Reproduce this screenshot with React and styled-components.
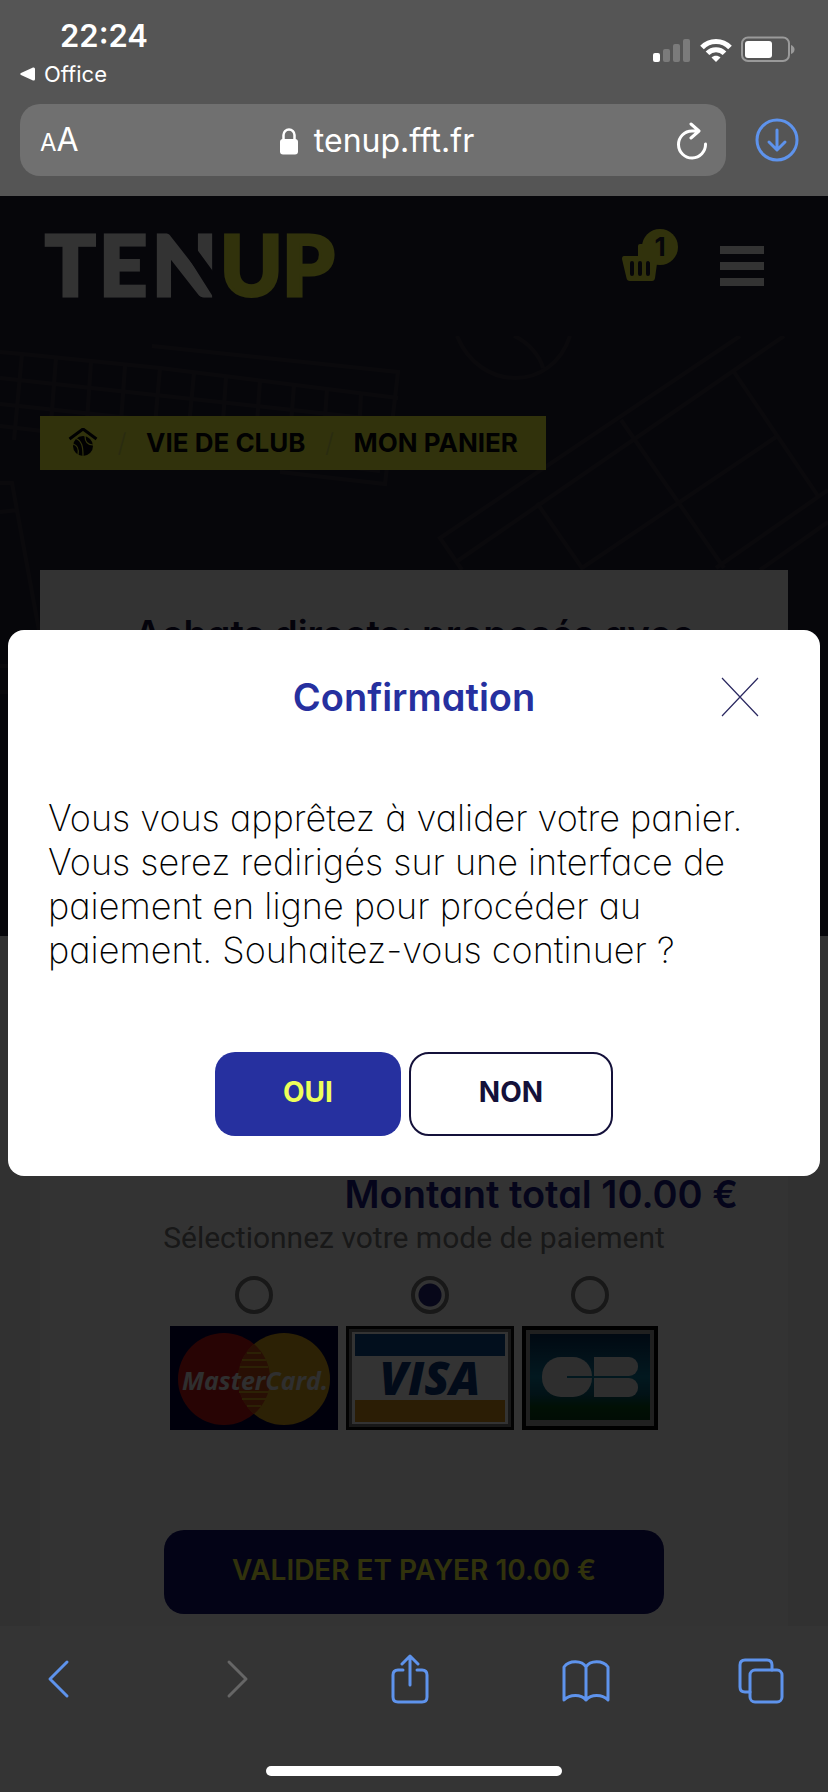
import React, { useState } from 'react';
import styled, { createGlobalStyle, css } from 'styled-components';

const navy = '#211f34';
const lime = '#f2fa3c';
const safariBlue = '#5e93ec';

const GlobalStyle = createGlobalStyle`
    * {
        box-sizing: border-box;
    }
    body {
        margin: 0;
        font-family: Inter, 'Liberation Sans', sans-serif;
        background: #343434;
    }
    button {
        font: inherit;
        color: inherit;
        border: 0;
        padding: 0;
        background: none;
        cursor: pointer;
    }
    svg {
        display: block;
    }
`;

const Phone = styled.div`
    display: flex;
    flex-direction: column;
    min-height: 100vh;
`;

/* ---------- browser top ---------- */

const TopChrome = styled.header`
    padding: 16px 20px 20px;
    background: #555;
    color: #fff;
`;

const StatusBar = styled.div`
    display: flex;
    justify-content: space-between;
    height: 88px;
    padding-right: 13px;
`;

const StatusLeft = styled.div`
    display: flex;
    flex-direction: column;
    align-items: flex-start;
`;

const Clock = styled.time`
    padding-left: 40px;
    font-size: 31px;
    line-height: 40px;
    font-weight: 600;
`;

const BackToApp = styled.button`
    display: flex;
    align-items: center;
    gap: 8px;
    font-size: 22px;
    line-height: 36px;
`;

const StatusIcons = styled.div`
    display: flex;
    align-items: flex-end;
    gap: 9px;
    height: 46px;
`;

const AddressRow = styled.div`
    display: flex;
    align-items: center;
    gap: 28px;
    padding-right: 8px;
`;

const AddressField = styled.div`
    display: flex;
    align-items: center;
    justify-content: space-between;
    flex: 1;
    height: 72px;
    padding: 2px 18px 0 20px;
    border-radius: 20px;
    background: #707070;
`;

const TextSize = styled.button`
    width: 38px;
    font-size: 32px;
    line-height: 40px;
    text-align: left;
    white-space: nowrap;

    small {
        font-size: 24px;
    }
`;

const Address = styled.div`
    display: flex;
    align-items: center;
    gap: 16px;
    font-size: 32px;
    line-height: 40px;
`;

/* ---------- web page ---------- */

const Viewport = styled.div`
    position: relative;
    flex: 1;
    display: flex;
    flex-direction: column;
    overflow: hidden;
    background: linear-gradient(${navy} 740px, #f5f5f5 740px);
`;

const Court = styled.svg`
    position: absolute;
    top: 140px;
    left: 0;
    width: 100%;
    height: 600px;
    fill: none;
    stroke: #33313f;
    stroke-width: 4;
`;

const SiteHeader = styled.div`
    display: flex;
    align-items: center;
    height: 140px;
    padding: 0 64px 0 44px;
`;

const LogoLink = styled.a`
    margin-right: auto;
`;

const Cart = styled.button`
    position: relative;
    width: 56px;
    height: 54px;
    margin: 0 42px 20px 0;
`;

const CartCount = styled.span`
    position: absolute;
    top: 0;
    right: 0;
    width: 36px;
    height: 36px;
    border-radius: 50%;
    background: ${lime};
    color: ${navy};
    font-size: 26px;
    line-height: 36px;
    font-weight: 700;
`;

const Burger = styled.button`
    display: flex;
    flex-direction: column;
    gap: 8px;
    width: 44px;

    i {
        height: 8px;
        width: 100%;
        background: #fff;
    }
`;

const Breadcrumb = styled.nav`
    position: relative;
    display: flex;
    align-items: center;
    align-self: flex-start;
    height: 54px;
    margin: 80px 40px 100px;
    padding: 0 28px;
    background: ${lime};
    color: #05050a;
    font-size: 26px;
    line-height: 32px;
    font-weight: 700;

    a {
        color: inherit;
        text-decoration: none;
    }
`;

const Slash = styled.span`
    width: 48px;
    text-align: center;
    font-weight: 300;
    color: #d0d850;
`;

const Card = styled.main`
    position: relative;
    flex: 1;
    display: flex;
    flex-direction: column;
    align-items: center;
    margin: 0 40px;
    padding: 42px 50px 12px;
    background: #fff;
`;

const CardTitle = styled.h1`
    margin: 0 0 auto;
    font-size: 38px;
    line-height: 44px;
    font-weight: 600;
    color: #14123a;
    text-align: center;
    font-feature-settings: 'cv11';
`;

const Total = styled.p`
    align-self: flex-end;
    margin: 0;
    font-size: 38px;
    line-height: 52px;
    font-weight: 600;
    color: #1c1c86;
    font-feature-settings: 'cv11';
`;

const Payment = styled.fieldset`
    display: flex;
    flex-direction: column;
    align-items: center;
    margin: 0 0 100px;
    padding: 0;
    border: 0;
    font-family: Roboto, sans-serif;

    legend {
        padding: 0;
        margin: 0 auto 20px;
        font-size: 30px;
        line-height: 36px;
        color: #777;
    }
`;

const Methods = styled.div`
    display: flex;
    gap: 8px;
`;

const Method = styled.label`
    display: flex;
    flex-direction: column;
    align-items: center;
    gap: 12px;
`;

const Radio = styled.input`
    appearance: none;
    width: 38px;
    height: 38px;
    margin: 0;
    border: 4px solid #777;
    border-radius: 50%;
    background: #fff;

    &:checked {
        background: radial-gradient(circle, #23237c 11px, #fff 12px);
    }
`;

const Button = styled.button`
    height: 84px;
    padding: 0 68px 4px;
    border-radius: 20px;
    font-size: 28px;
    line-height: 32px;
    font-weight: ${props => (props.$dark ? 600 : 700)};
    ${props =>
        props.$outline
            ? css`
                  border: 2px solid #14113a;
                  background: #fff;
                  color: #14113a;
              `
            : css`
                  background: ${props.$dark ? '#0f0f70' : '#26309f'};
                  color: ${props.$dark ? lime : '#eeff5a'};
              `}
`;

/* ---------- dialog ---------- */

const Overlay = styled.div`
    position: absolute;
    inset: 0;
    display: flex;
    flex-direction: column;
    justify-content: center;
    padding: 0 8px 16px;
    background: rgba(0, 0, 0, 0.8);
`;

const Dialog = styled.section`
    padding: 40px;
    border-radius: 16px;
    background: #fff;
    font-feature-settings: 'cv11';
`;

const DialogHead = styled.div`
    display: grid;
    grid-template-columns: 40px 1fr 40px;
    align-items: center;
    padding: 0 20px;
    margin-bottom: 72px;

    h2 {
        grid-column: 2;
        margin: 0;
        font-size: 38px;
        line-height: 54px;
        font-weight: 600;
        color: #26309f;
        text-align: center;
    }
`;

const Message = styled.p`
    margin: 0 0 80px;
    font-size: 36px;
    line-height: 44px;
    font-weight: 200;
    color: #000;
`;

const Actions = styled.div`
    display: flex;
    justify-content: center;
    gap: 8px;
`;

/* ---------- browser bottom ---------- */

const BottomChrome = styled.footer`
    height: 166px;
    padding: 28px 0 16px;
    background: #343434;
    display: flex;
    flex-direction: column;
    justify-content: space-between;
`;

const Toolbar = styled.nav`
    display: flex;
    justify-content: space-between;
    padding: 0 42px 0 34px;
    color: ${safariBlue};

    button {
        display: flex;
        justify-content: center;
        width: 50px;
    }
`;

const HomeIndicator = styled.div`
    align-self: center;
    width: 296px;
    height: 10px;
    border-radius: 5px;
    background: #fff;
`;

/* ---------- drawings ---------- */

const Line = props => (
    <svg fill="none" stroke="currentColor" strokeWidth="3" strokeLinecap="round" strokeLinejoin="round" {...props} />
);

function Signal() {
    return (
        <svg width="38" height="24" fill="#7b7b7b">
            <rect x="0" y="15" width="7" height="9" rx="2" fill="#fff" />
            <rect x="10" y="11" width="7" height="13" rx="2" />
            <rect x="20" y="6" width="7" height="18" rx="2" />
            <rect x="30" y="1" width="7" height="23" rx="2" />
        </svg>
    );
}

function Wifi() {
    return (
        <svg width="32" height="24" viewBox="0 0 32 24" fill="none" stroke="#fff" strokeWidth="5">
            <path d="M2 9.5 C9.5 1.5 22.5 1.5 30 9.5" />
            <path d="M7.5 15.3 C12 10.5 20 10.5 24.5 15.3" />
            <path d="M11.5 19.5 C14 17 18 17 20.5 19.5 L16 24 Z" fill="#fff" stroke="none" />
        </svg>
    );
}

function Battery() {
    return (
        <svg width="54" height="26" viewBox="0 0 54 26">
            <rect x="1" y="1.5" width="47" height="23.5" rx="6" fill="none" stroke="#9a9a9a" strokeWidth="2" />
            <rect x="4" y="5" width="27" height="17" rx="3" fill="#fff" />
            <path d="M50 9 q3.5 1.5 3.5 4.5 t-3.5 4.5 z" fill="#9a9a9a" />
        </svg>
    );
}

function Lock() {
    return (
        <svg width="18" height="27" viewBox="0 0 18 27">
            <rect y="11" width="18" height="15.5" rx="3" fill="#fff" />
            <path d="M3.5 12 V7 a5.5 5.5 0 0 1 11 0 V12" fill="none" stroke="#fff" strokeWidth="2.5" />
        </svg>
    );
}

function Logo() {
    return (
        <svg width="300" height="120" fontFamily="Lato" fontWeight="900" fontSize="84" strokeWidth="3">
            <g fill="#fff" stroke="#fff">
                <text x="1" y="90">T</text>
                <text x="55" y="90">E</text>
                <text x="108" y="90">N</text>
            </g>
            <path d="M128 26 H152 V42 L171 68 V94 Z" fill={navy} />
            <g fill={lime} stroke={lime}>
                <text x="176" y="90">U</text>
                <text x="238" y="90">P</text>
            </g>
        </svg>
    );
}

function Basket() {
    return (
        <svg width="38" height="54" viewBox="0 0 38 54">
            <path d="M2 27 H16 V17 q0 -2 2 -2 h6 v12 H36 L33 49 q-0.5 3 -3 3 H8 q-3 0 -3.5 -3 L0 30 q0 -3 2 -3z" fill={lime} />
            <path d="M10 34 V45 M18 34 V45 M26 34 V45" stroke={navy} strokeWidth="4" strokeLinecap="round" />
        </svg>
    );
}

function ClubHome() {
    return (
        <svg width="30" height="30" viewBox="0 0 30 30" fill="none">
            <path d="M1.5 11 L15 1 L28.5 11" stroke="#05050a" strokeWidth="3" />
            <circle cx="15" cy="18" r="10" fill="#05050a" />
            <path d="M8 10.5 C14 13 15 19 15 28 M5 16 C9 17 11 21 10 27 M17 8 C17 14 20 17 25 17" stroke={lime} strokeWidth="1.2" />
        </svg>
    );
}

function CourtLines() {
    return (
        <Court viewBox="0 0 828 600" preserveAspectRatio="xMidYMin slice">
            <path d="M0 16 L22 18 L160 32 L398 62 M0 42 L392 85 M0 68 L390 110 M0 90 L380 135 M152 10 L398 36 L385 148 L280 136" />
            <path d="M22 18 L14 104 M56 22 L50 100 M91 26 L86 100 M125 30 L120 100 M160 32 L154 100 M194 37 L188 100 M226 41 L222 100 M260 45 L256 100 M294 49 L290 100 M327 53 L323 110 M361 58 L358 120" />
            <path d="M457 0 C480 56 552 56 570 0 M514 0 C528 6 540 20 543 32" />
            <path d="M740 0 L440 202 L462 234 M784 0 L456 226 M734 36 L818 160 M828 154 L716 232 M760 234 L828 186" />
            <path d="M621 84 L724 232 M776 101 L582 232 L537 167" />
            <path d="M0 147 H12 L40 300 M0 176 L18 174 M0 330 H8 M0 356 H8" />
        </Court>
    );
}

function MasterCard() {
    return (
        <svg width="168" height="104">
            <rect width="168" height="104" fill="#04043c" />
            <circle cx="54" cy="53" r="46" fill="#c81818" />
            <circle cx="114" cy="53" r="46" fill="#dba41c" />
            <path d="M84 18 A46 46 0 0 1 84 88 A46 46 0 0 1 84 18" fill="#c84a18" />
            <path d="M77 27h14M72 34h24M70 41h28M69 66h30M72 73h24M77 80h14" stroke="#dba41c" strokeWidth="2" />
            <text x="85" y="64" textAnchor="middle" fontFamily="Open Sans" fontStyle="italic" fontWeight="700" fontSize="25" fill="#e8e8e8">
                MasterCard.
            </text>
        </svg>
    );
}

function Visa() {
    return (
        <svg width="168" height="104">
            <rect width="168" height="104" fill="#0a0a0a" />
            <rect x="3" y="3" width="162" height="98" fill="#777" />
            <rect x="6" y="6" width="156" height="92" fill="#fff" />
            <rect x="9" y="8" width="150" height="22" fill="#0a4a90" />
            <rect x="9" y="74" width="150" height="22" fill="#d8921c" />
            <text x="84" y="69" textAnchor="middle" fontFamily="Open Sans" fontStyle="italic" fontWeight="800" fontSize="46" fill="#0a3a7c">
                VISA
            </text>
        </svg>
    );
}

function CarteBleue() {
    return (
        <svg width="136" height="104">
            <defs>
                <linearGradient id="cb" x1="0" y1="0" x2="0" y2="1">
                    <stop offset="0" stopColor="#08305c" />
                    <stop offset="0.5" stopColor="#0c7a9c" />
                    <stop offset="0.7" stopColor="#0a5a70" />
                    <stop offset="0.85" stopColor="#08501c" />
                    <stop offset="1" stopColor="#06401c" />
                </linearGradient>
            </defs>
            <rect width="136" height="104" fill="#000" />
            <rect x="4" y="4" width="128" height="96" fill="#a0a0a0" />
            <rect x="8" y="8" width="120" height="86" fill="url(#cb)" />
            <rect x="20" y="31" width="50" height="40" rx="19" fill="#e4e4e4" />
            <rect x="72" y="31" width="44" height="19" rx="9" fill="#e4e4e4" />
            <rect x="72" y="52" width="44" height="19" rx="9" fill="#e4e4e4" />
            <path d="M72 31h12v19H72z M72 52h12v19H72z" fill="#e4e4e4" />
            <path d="M45 51h27" stroke="#0c7a9c" strokeWidth="2" />
        </svg>
    );
}

const methods = [
    { id: 'mastercard', label: 'MasterCard', Picture: MasterCard },
    { id: 'visa', label: 'Visa', Picture: Visa },
    { id: 'cb', label: 'Carte bancaire', Picture: CarteBleue },
];

function App() {
    const [open, setOpen] = useState(true);
    const [method, setMethod] = useState('visa');
    const close = () => setOpen(false);

    return (
        <Phone>
            <GlobalStyle />
            <TopChrome>
                <StatusBar>
                    <StatusLeft>
                        <Clock>22:24</Clock>
                        <BackToApp>
                            <svg width="16" height="14" fill="#fff">
                                <path d="M1 6 L13 0.5 q2 -0.5 2 1.5 V12 q0 2 -2 1.5 L1 8 q-1.5 -1 0 -2z" />
                            </svg>
                            Office
                        </BackToApp>
                    </StatusLeft>
                    <StatusIcons>
                        <Signal />
                        <Wifi />
                        <Battery />
                    </StatusIcons>
                </StatusBar>
                <AddressRow>
                    <AddressField>
                        <TextSize aria-label="Taille du texte">
                            <small>A</small>A
                        </TextSize>
                        <Address>
                            <Lock />
                            tenup.fft.fr
                        </Address>
                        <button aria-label="Recharger">
                            <Line width="32" height="38" viewBox="0 0 32 38">
                                <path d="M29.5 22 A13.5 13.5 0 1 1 16 9 H22 M15 2 L23 9 L15 16" />
                            </Line>
                        </button>
                    </AddressField>
                    <button aria-label="Téléchargements">
                        <Line width="46" height="46" viewBox="0 0 46 46" color={safariBlue}>
                            <circle cx="23" cy="23" r="20" />
                            <path d="M23 13 V32 M15 25 L23 33 L31 25" />
                        </Line>
                    </button>
                </AddressRow>
            </TopChrome>

            <Viewport>
                <CourtLines />
                <SiteHeader>
                    <LogoLink href="#accueil" aria-label="Ten'Up">
                        <Logo />
                    </LogoLink>
                    <Cart aria-label="Panier">
                        <Basket />
                        <CartCount>1</CartCount>
                    </Cart>
                    <Burger aria-label="Menu">
                        <i />
                        <i />
                        <i />
                    </Burger>
                </SiteHeader>
                <Breadcrumb>
                    <a href="#accueil" aria-label="Accueil">
                        <ClubHome />
                    </a>
                    <Slash>/</Slash>
                    <a href="#club">VIE DE CLUB</a>
                    <Slash>/</Slash>
                    <a href="#panier">MON PANIER</a>
                </Breadcrumb>
                <Card>
                    <CardTitle>Achats directs: proposés avec</CardTitle>
                    <Total>Montant total 10.00 €</Total>
                    <Payment>
                        <legend>Sélectionnez votre mode de paiement</legend>
                        <Methods>
                            {methods.map(({ id, label, Picture }) => (
                                <Method key={id}>
                                    <Radio
                                        type="radio"
                                        name="method"
                                        aria-label={label}
                                        checked={method === id}
                                        onChange={() => setMethod(id)}
                                    />
                                    <Picture />
                                </Method>
                            ))}
                        </Methods>
                    </Payment>
                    <Button $dark onClick={() => setOpen(true)}>
                        VALIDER ET PAYER 10.00 €
                    </Button>
                </Card>

                {open && (
                    <Overlay>
                        <Dialog role="dialog" aria-modal="true" aria-labelledby="dialog-title">
                            <DialogHead>
                                <h2 id="dialog-title">Confirmation</h2>
                                <button aria-label="Fermer" onClick={close}>
                                    <svg width="40" height="40" stroke="#2a2860" strokeWidth="1.2">
                                        <path d="M2 1 L38 39 M38 1 L2 39" />
                                    </svg>
                                </button>
                            </DialogHead>
                            <Message>
                                Vous vous apprêtez à valider votre panier. Vous serez redirigés sur une interface de
                                paiement en ligne pour procéder au paiement. Souhaitez-vous continuer ?
                            </Message>
                            <Actions>
                                <Button onClick={close}>OUI</Button>
                                <Button $outline onClick={close}>
                                    NON
                                </Button>
                            </Actions>
                        </Dialog>
                    </Overlay>
                )}
            </Viewport>

            <BottomChrome>
                <Toolbar>
                    <button aria-label="Précédent">
                        <Line width="28" height="50" viewBox="0 0 28 50">
                            <path d="M22 8 L5 25 L22 42" />
                        </Line>
                    </button>
                    <button aria-label="Suivant">
                        <Line width="28" height="50" viewBox="0 0 28 50" color="#666">
                            <path d="M8 8 L25 25 L8 42" />
                        </Line>
                    </button>
                    <button aria-label="Partager">
                        <Line width="40" height="50" viewBox="0 0 40 50">
                            <path d="M13 16 H8 q-5 0 -5 5 V43 q0 5 5 5 H32 q5 0 5 -5 V21 q0 -5 -5 -5 H27 M20 31 V2 M12 10 L20 2 L28 10" />
                        </Line>
                    </button>
                    <button aria-label="Signets">
                        <Line width="50" height="50" viewBox="0 0 50 50">
                            <path d="M25 13 C21 6 8 6 3 13 V46 C9 40 20 40 25 46 C30 40 41 40 47 46 V13 C42 6 29 6 25 13 V46" />
                        </Line>
                    </button>
                    <button aria-label="Onglets">
                        <Line width="46" height="50" viewBox="0 0 46 50">
                            <rect x="12" y="16" width="32" height="32" rx="5" />
                            <path d="M34 16 V11 q0 -5 -5 -5 H7 q-5 0 -5 5 V33 q0 5 5 5 H12" />
                        </Line>
                    </button>
                </Toolbar>
                <HomeIndicator />
            </BottomChrome>
        </Phone>
    );
}

export default App;
